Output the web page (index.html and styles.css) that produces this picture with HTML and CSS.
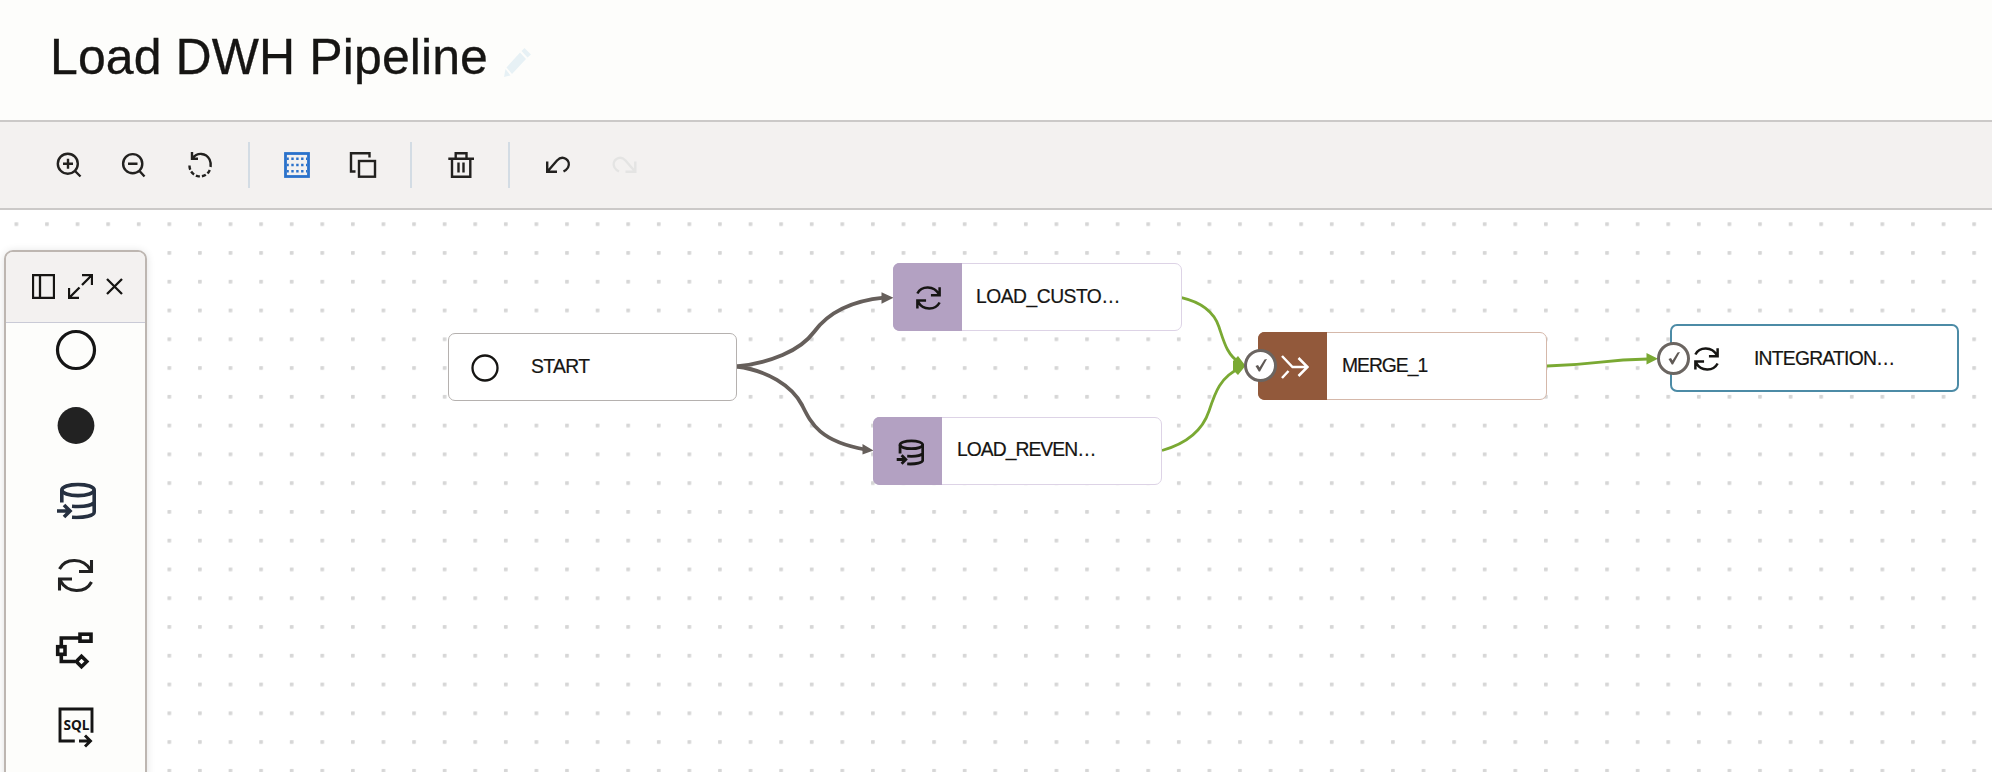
FILE: index.html
```html
<!DOCTYPE html>
<html lang="en">
<head>
<meta charset="utf-8">
<title>Load DWH Pipeline</title>
<link rel="stylesheet" href="styles.css">
</head>
<body>
<svg class="defs" aria-hidden="true">
  <symbol id="sync" viewBox="0 0 36 34">
    <path d="M2 10.5C8-1 26-1 33 11.5M34 1.500V13H21.500M34 23.500C28 35 10 35 3 22.500M2 32V20.500H14.500" fill="none" stroke="currentColor"/>
  </symbol>
  <symbol id="database" viewBox="0 0 40 37">
    <g fill="none" stroke="currentColor">
      <ellipse cx="22" cy="7.500" rx="16.200" ry="5.600"/>
      <path d="M5.800 7.500V20M38.200 7.500V29.500C38.200 33 29 35.500 16 34.800M38.200 20C35 23.500 27 24.500 16 23.800M1 28.500H14M8 22.500L14 28.500L8 34.500"/>
    </g>
  </symbol>
  <symbol id="check" viewBox="0 0 12 13">
    <path d="M0.500 7L3 6L4.500 8.500L9.500 0.500L12 0L5 12.500H3.800Z" fill="currentColor"/>
  </symbol>
</svg>

<header class="header">
  <h1 class="title">Load DWH Pipeline</h1>
  <svg class="pencil" viewBox="0 0 27 29"><path d="M0 29L1.500 21L6.500 27.500ZM2.500 19.500L16 4.500L22 11L8 26ZM17.500 3L20.500 0L27 6.500L23.500 9.500Z"/></svg>
</header>

<div class="toolbar">
  <button class="tool"><svg viewBox="52 149 32 32"><circle cx="67.800" cy="163.700" r="10"/><path d="M63 163.700H73M68 158.700V168.700M75 171L80.500 176.500"/></svg></button>
  <button class="tool"><svg viewBox="118 149 32 32"><circle cx="132.700" cy="163.700" r="9.600"/><path d="M128 163.700H137.500M139.500 171L144.500 176.500"/></svg></button>
  <button class="tool"><svg viewBox="184 149 32 32"><path d="M192 152V158.800H198M192.500 158.500C197 152 206 152.500 209.600 159.500Q211.200 163 210.600 167"/><path d="M209.800 170A10.600 10.600 0 0 1 189.500 165" stroke-dasharray="4.200 2"/></svg></button>
  <span class="divider"></span>
  <button class="tool tool-active"><svg viewBox="281 149 32 32"><rect x="285.500" y="153.500" width="23" height="23" stroke-width="2.800"/><path d="M287 158.700H307M287 165H307M287 171.300H307" stroke-dasharray="2.400 2.500" stroke-dashoffset="0.600"/></svg></button>
  <button class="tool"><svg viewBox="347 149 32 32"><path d="M355.500 171.500H351V153.300H369.500V157.500"/><rect x="359" y="161" width="16" height="15.700"/></svg></button>
  <span class="divider"></span>
  <button class="tool tool-delete"><svg viewBox="445 149 32 32"><path d="M448.300 158.800H474M455.700 158V153.300H466.500V158M452 159V176.700H470.300V159M458.500 162.500V172.500M463.500 162.500V172.500"/></svg></button>
  <span class="divider"></span>
  <button class="tool"><svg viewBox="542 149 32 32"><path d="M547.200 161.500V171.800H557M547.500 171.500L557 160.500C563 154 571.500 160.500 568 167.500Q566.500 170 563.500 171.500"/></svg></button>
  <button class="tool tool-disabled"><svg viewBox="608 149 32 32"><path d="M635.300 161.500V171.800H625.500M635 171.500L625.500 160.500C619.500 154 611 160.500 614.500 167.500Q616 170 619 171.500"/></svg></button>
</div>

<main class="canvas">
  <svg class="layer" viewBox="0 210 1992 562">
    <defs>
      <pattern id="dots" x="14.500" y="222.300" width="30.590" height="28.770" patternUnits="userSpaceOnUse"><rect width="3.700" height="3.700" rx="0.600"/></pattern>
    </defs>
    <rect class="dots" y="210" width="1992" height="562" fill="url(#dots)"/>
    <g class="edge">
      <path d="M736 366.500C770 363 800 351 814 332C828 313 850 301 884 297.700"/>
      <path d="M736 366.500C767 370 792 386 802 405C811 423 819 441 865 449.500"/>
      <path class="head" d="M893.500 297.700L881.500 292.300V303.700ZM873.500 450.500L862.500 444V454.500Z"/>
    </g>
    <g class="edge edge-success">
      <path d="M1181.500 297.700C1200 302 1214 312 1219 327C1224 342 1227 355 1240 363"/>
      <path d="M1162 450.500C1185 444 1202 432 1209 411C1215 393 1220 377 1240 368"/>
      <path d="M1547 366C1598 365 1598 360 1648 359"/>
      <path class="head" d="M1245.500 365.700L1238 356L1233 361V370L1238 375ZM1658 358.700L1646.500 353V364.500Z"/>
    </g>
  </svg>

  <div class="node node-start">
    <span class="node-icon"><svg class="ring" viewBox="0 0 28 28"><circle cx="14" cy="14" r="12.500"/></svg></span>
    <span class="label">START</span>
  </div>
  <div class="node node-purple node-customers">
    <span class="node-icon"><svg class="icon-sync"><use href="#sync"/></svg></span>
    <span class="label">LOAD_CUSTO…</span>
  </div>
  <div class="node node-purple node-revenue">
    <span class="node-icon"><svg class="icon-database"><use href="#database"/></svg></span>
    <span class="label">LOAD_REVEN…</span>
  </div>
  <div class="node node-merge">
    <span class="node-icon"><svg class="icon-merge" viewBox="0 0 28 24"><path d="M1 1L11.500 12H26.500M1 23L7.500 16M17.500 3L26.500 12L17.500 21"/></svg></span>
    <span class="label">MERGE_1</span>
    <span class="badge"><svg><use href="#check"/></svg></span>
  </div>
  <div class="node node-integration">
    <span class="node-icon"><svg class="icon-sync"><use href="#sync"/></svg></span>
    <span class="label">INTEGRATION…</span>
    <span class="badge"><svg><use href="#check"/></svg></span>
  </div>

  <aside class="palette">
    <div class="palette-header">
      <svg class="p-panel" viewBox="0 0 23 25"><path d="M1 1H22V24H1ZM8 1V24"/></svg>
      <svg class="p-expand" viewBox="0 0 25 25"><path d="M14 1H24V11M24 1L14 11M1 14V24H11M1 24L11.500 13.500"/></svg>
      <svg class="p-close" viewBox="0 0 17 17"><path d="M1 1L16 16M16 1L1 16"/></svg>
    </div>
    <div class="palette-items">
      <svg class="item" viewBox="0 0 44 44"><circle cx="22" cy="22" r="18.500" fill="none" stroke="#151515" stroke-width="3.200"/></svg>
      <svg class="item" viewBox="0 0 44 44"><circle cx="22" cy="22.500" r="18.400" fill="#222"/></svg>
      <svg class="item item-database" viewBox="0 0 44 44"><use href="#database" x="2" y="4.500" width="40" height="37"/></svg>
      <svg class="item item-sync" viewBox="0 0 44 44"><use href="#sync" x="3.500" y="4.500" width="36" height="34"/></svg>
      <svg class="item" viewBox="0 0 44 44"><g fill="none" stroke="#151515" stroke-width="3.600"><path d="M25 9H7.300V16M7.300 27V32.500H21"/><rect x="26" y="5.200" width="11" height="7"/><rect x="3.700" y="17.700" width="7.300" height="7.600"/><path d="M27.500 27.300L32.800 32.500L27.500 37.700L22.300 32.500Z"/></g></svg>
      <svg class="item" viewBox="0 0 44 44"><path d="M20.800 37H6V5H38V28.800M25 37H37M31 31.500L36.500 37L31 42.500" fill="none" stroke="#151515" stroke-width="2.900"/><text class="sql" x="9.500" y="26.300" textLength="26" lengthAdjust="spacingAndGlyphs">SQL</text></svg>
    </div>
  </aside>
</main>
</body>
</html>
```

FILE: styles.css
```css
* { box-sizing: border-box; }
body {
  margin: 0;
  width: 1992px;
  height: 772px;
  overflow: hidden;
  display: flex;
  flex-direction: column;
  background: #fff;
  color: #161513;
  font-family: "Liberation Sans", Arial, sans-serif;
}
svg { display: block; flex: none; }
.defs { position: absolute; width: 0; height: 0; }

.header {
  height: 120px;
  flex: none;
  display: flex;
  align-items: flex-start;
  padding: 28px 0 0 50px;
  background: #fdfdfb;
}
.title {
  margin: 0;
  width: 454px;
  padding-top: 1px;
  font-size: 50px;
  font-weight: 400;
  line-height: 56px;
  letter-spacing: 0.1px;
  white-space: nowrap;
  -webkit-text-stroke: 0.3px currentColor;
}
.pencil { width: 27px; height: 29px; margin-top: 20px; fill: #e7f1f5; }

.toolbar {
  height: 90px;
  flex: none;
  display: flex;
  align-items: center;
  padding-left: 35px;
  background: #f3f1f0;
  border-top: 2px solid #cbc9c8;
  border-bottom: 2px solid #cbc9c8;
}
.tool {
  width: 66px;
  height: 46px;
  padding: 0;
  border: 0;
  background: none;
  display: flex;
  align-items: center;
  justify-content: center;
  color: #22211f;
}
.tool svg { width: 32px; height: 32px; fill: none; stroke: currentColor; stroke-width: 2.4; }
.tool-active { color: #2b72cb; }
.tool-disabled { color: #e4e4e3; }
.tool-delete { margin-left: 2px; }
.divider { width: 2px; height: 46px; margin: 0 14px; background: #d3dce4; }
.tool + .divider:nth-child(4) { margin-left: 15px; }
.tool-delete + .divider { margin-right: 15px; }

.canvas { position: relative; flex: 1; min-height: 0; overflow: hidden; }
.layer { width: 1992px; height: 562px; }
.layer pattern rect { fill: #d6d6d6; }
.edge path { fill: none; stroke: #665f5b; stroke-width: 3.8; }
.edge .head { fill: #665f5b; stroke: none; }
.edge-success path { stroke: #7aa933; stroke-width: 2.8; }
.edge-success .head { fill: #7aa933; }

.node {
  position: absolute;
  width: 289px;
  height: 68px;
  display: flex;
  align-items: stretch;
  background: #fff;
  border: 1.5px solid #b5b1af;
  border-radius: 7px;
}
.node-icon {
  width: 68px;
  display: flex;
  align-items: center;
  justify-content: center;
  color: #161513;
  border-radius: 5px 0 0 5px;
}
.label {
  padding: 2px 0 0 14px;
  font-size: 19.3px;
  line-height: 62px;
  letter-spacing: -0.5px;
  white-space: nowrap;
  -webkit-text-stroke: 0.2px currentColor;
}
.node-start { left: 448px; top: 123px; }
.node-start .label { padding-left: 14px; letter-spacing: -0.6px; }
.node-customers { left: 893px; top: 53px; }
.node-revenue { left: 873px; top: 207px; }
.node-revenue .label { padding-top: 1px; padding-left: 15px; letter-spacing: -0.95px; }
.node-purple { border-color: #ddd3e6; }
.node-purple .node-icon { background: #b3a1c2; box-shadow: -1px 0 #b3a1c2, 0 1px #b3a1c2, 0 -1px #b3a1c2; }
.node-merge { left: 1258px; top: 122px; border-color: #d5b8aa; }
.node-merge .label { padding-left: 15px; letter-spacing: -1px; }
.node-merge .node-icon { background: #92593b; color: #fff; box-shadow: -1px 0 #92593b, 0 1px #92593b, 0 -1px #92593b; }
.node-integration { left: 1670px; top: 114px; border: 2px solid #4c8ba6; }
.node-integration .label { letter-spacing: -0.75px; }
.ring { width: 28px; height: 28px; margin: 1px 0 0 3px; fill: none; stroke: #161513; stroke-width: 2.3; }
.icon-sync { width: 25px; height: 24px; margin: 2px 0 0 1px; stroke-width: 3.6; }
.icon-database { width: 28px; height: 27px; margin: 2px 0 0 3px; stroke-width: 4; }
.icon-merge { width: 28px; height: 24px; margin: 2px 0 0 3px; fill: none; stroke: currentColor; stroke-width: 2.5; }
.badge {
  position: absolute;
  left: -15px;
  top: 16px;
  width: 33px;
  height: 33px;
  display: flex;
  align-items: center;
  justify-content: center;
  border: 3px solid #6b6561;
  border-radius: 50%;
  background: #fff;
  color: #5f5955;
}
.badge svg { width: 12px; height: 13px; }

.palette {
  position: absolute;
  left: 4px;
  top: 40px;
  width: 143px;
  height: 540px;
  background: #fdfdfb;
  border: 2px solid #bdb6b1;
  border-radius: 9px;
  box-shadow: 0 1px 8px rgba(0, 0, 0, 0.12);
}
.palette-header {
  height: 71px;
  display: flex;
  align-items: center;
  padding: 0 0 1px 26px;
  background: #f3f1f0;
  border-bottom: 1px solid #c9cad6;
  border-radius: 7px 7px 0 0;
}
.palette-header svg { fill: none; stroke: #161513; stroke-width: 2.3; }
.p-panel { width: 23px; height: 25px; }
.p-expand { width: 25px; height: 25px; margin-left: 13px; }
.p-close { width: 17px; height: 17px; margin-left: 13px; }
.palette-items {
  display: flex;
  flex-direction: column;
  gap: 31.2px;
  padding: 5px 0 0 48px;
}
.item { width: 44px; height: 44px; color: #222; overflow: visible; }
.item-database { color: #263040; stroke-width: 3.6; }
.item-sync { stroke-width: 3.1; }
.sql { font: 700 15px "Noto Sans", sans-serif; fill: #151515; }
```
